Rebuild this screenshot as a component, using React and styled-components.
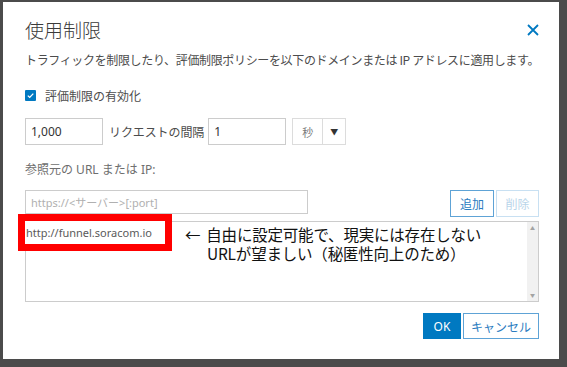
import React from "react";
import styled, { createGlobalStyle } from "styled-components";

const GlobalStyle = createGlobalStyle`
  html, body {
    margin: 0;
    padding: 0;
    background: #4b4b4b;
    font-family: "Noto Sans", "Noto Sans CJK JP", sans-serif;
  }
`;

const Page = styled.div`
  width: 567px;
  height: 367px;
  padding: 2px 0 0 3px;
  box-sizing: border-box;
  overflow: hidden;
`;

const Dialog = styled.div`
  width: 556px;
  height: 357px;
  background: #fff;
  box-sizing: border-box;
  padding: 16px 20px 0 22px;
  display: flex;
  flex-direction: column;
`;

const Header = styled.div`
  display: flex;
  align-items: center;
  justify-content: space-between;
  height: 24px;
`;

const Title = styled.div`
  font-size: 19px;
  line-height: 24px;
  font-weight: 300;
  color: #3a3a3a;
  font-family: "Noto Sans CJK JP", sans-serif;
`;

const CloseButton = styled.div`
  width: 12px;
  height: 12px;
  display: flex;
  cursor: pointer;
`;

const Description = styled.div`
  margin-top: 9px;
  font-size: 12px;
  letter-spacing: -0.35px;
  line-height: 18px;
  color: #4c4c4c;
  font-family: "Noto Sans CJK JP", sans-serif;
  white-space: nowrap;
`;

const CheckRow = styled.label`
  margin-top: 17px;
  height: 18px;
  display: flex;
  align-items: center;
  gap: 9px;
  font-size: 12px;
  color: #4c4c4c;
  font-family: "Noto Sans CJK JP", sans-serif;
`;

const CheckBox = styled.span`
  width: 11px;
  height: 11px;
  border-radius: 1px;
  background: #0079c1;
  display: flex;
  align-items: center;
  justify-content: center;
`;

const RateRow = styled.div`
  margin-top: 14px;
  display: flex;
  align-items: center;
  height: 27px;
`;

const TextInput = styled.div`
  box-sizing: border-box;
  width: ${({ $w }) => $w}px;
  height: ${({ $h }) => $h || 27}px;
  border: 1px solid #cccccc;
  padding: 0 5px;
  display: flex;
  align-items: center;
  font-size: ${({ $placeholder }) => ($placeholder ? 11 : 12)}px;
  color: ${({ $placeholder }) => ($placeholder ? "#b0b0b0" : "#333")};
  background: #fff;
  white-space: nowrap;
`;

const InlineLabel = styled.span`
  margin: 0 4px 0 6px;
  font-size: 12px;
  letter-spacing: -0.1px;
  color: #4c4c4c;
  font-family: "Noto Sans CJK JP", sans-serif;
`;

const Select = styled.div`
  margin-left: 6px;
  display: flex;
  height: 27px;
  border: 1px solid #dcdcdc;
  box-sizing: border-box;
`;

const SelectValue = styled.div`
  width: 29px;
  display: flex;
  align-items: center;
  justify-content: center;
  font-size: 11px;
  color: #777;
  font-family: "Noto Sans CJK JP", sans-serif;
`;

const SelectArrow = styled.div`
  width: 22px;
  border-left: 1px solid #dcdcdc;
  display: flex;
  align-items: center;
  justify-content: center;
  font-size: 8px;
  color: #333;
`;

const FieldLabel = styled.div`
  margin-top: 17px;
  font-size: 12px;
  line-height: 16px;
  color: #6e6e6e;
  font-family: "Noto Sans", "Noto Sans CJK JP", sans-serif;
`;

const UrlRow = styled.div`
  margin-top: 12px;
  display: flex;
  align-items: flex-start;
  height: 27px;
`;

const Spacer = styled.div`
  flex: 1;
`;

const OutlineButton = styled.button`
  box-sizing: border-box;
  width: ${({ $w }) => $w}px;
  height: ${({ $h }) => $h || 27}px;
  margin-left: ${({ $ml }) => $ml || 0}px;
  padding: 0;
  background: #fff;
  border: 1px solid ${({ disabled }) => (disabled ? "#c8e0f2" : "#5ea3d6")};
  color: ${({ disabled }) => (disabled ? "#b9d5ea" : "#2b7cbf")};
  font-size: 12px;
  font-family: "Noto Sans CJK JP", sans-serif;
  cursor: pointer;
`;

const PrimaryButton = styled.button`
  box-sizing: border-box;
  width: 38px;
  height: 26px;
  padding: 0;
  border: none;
  background: #0079c1;
  color: #fff;
  font-size: 12px;
  font-family: "Noto Sans", sans-serif;
  cursor: pointer;
`;

const ListBox = styled.div`
  position: relative;
  margin-top: 4px;
  height: 81px;
  box-sizing: border-box;
  border: 1px solid #cccccc;
  display: flex;
`;

const ListItems = styled.div`
  flex: 1;
  padding: 4px 5px;
`;

const ListItem = styled.div`
  font-size: 11px;
  line-height: 16px;
  color: #5a5a5a;
`;

const Scrollbar = styled.div`
  width: 11px;
  background: #f1f1f1;
  display: flex;
  flex-direction: column;
  justify-content: space-between;
  align-items: center;
  padding: 3px 0;
  box-sizing: border-box;
  font-size: 5px;
  line-height: 6px;
  color: #a3a3a3;
`;

const Highlight = styled.div`
  position: absolute;
  left: -8px;
  top: -8px;
  width: 154px;
  height: 37px;
  box-sizing: border-box;
  border: 7px solid #ff0000;
  background: #fff;
  display: flex;
  align-items: center;
  padding-left: 1px;
`;

const Note = styled.div`
  position: absolute;
  left: 159px;
  top: 3px;
  display: flex;
  flex-direction: column;
  gap: 1px;
  font-size: 15.5px;
  letter-spacing: -0.2px;
  line-height: 18px;
  color: #111;
  font-family: "Noto Sans CJK JP", sans-serif;
  white-space: nowrap;
`;

const NoteLine = styled.div`
  padding-left: ${({ $indent }) => $indent || 0}px;
`;

const Arrow = styled.span`
  margin-right: 6px;
`;

const Footer = styled.div`
  margin-top: 11px;
  display: flex;
  justify-content: flex-end;
  gap: 2px;
`;

export default function App() {
  return (
    <Page>
      <GlobalStyle />
      <Dialog>
        <Header>
          <Title>使用制限</Title>
          <CloseButton>
            <svg width="12" height="12" viewBox="0 0 12 12">
              <path d="M1 1 L11 11 M11 1 L1 11" stroke="#0079c1" strokeWidth="1.8" fill="none" />
            </svg>
          </CloseButton>
        </Header>
        <Description>
          トラフィックを制限したり、評価制限ポリシーを以下のドメインまたは IP アドレスに適用します。
        </Description>
        <CheckRow>
          <CheckBox>
            <svg width="9" height="9" viewBox="0 0 9 9">
              <path d="M1.8 4.6 L3.7 6.4 L7.3 2.6" stroke="#fff" strokeWidth="1.3" fill="none" />
            </svg>
          </CheckBox>
          評価制限の有効化
        </CheckRow>
        <RateRow>
          <TextInput $w={78}>1,000</TextInput>
          <InlineLabel>リクエストの間隔</InlineLabel>
          <TextInput $w={78}>1</TextInput>
          <Select>
            <SelectValue>秒</SelectValue>
            <SelectArrow>▼</SelectArrow>
          </Select>
        </RateRow>
        <FieldLabel>参照元の URL または IP:</FieldLabel>
        <UrlRow>
          <TextInput $w={283} $h={24} $placeholder>
            https://&lt;サーバー&gt;[:port]
          </TextInput>
          <Spacer />
          <OutlineButton $w={44}>追加</OutlineButton>
          <OutlineButton $w={43} $ml={2} disabled>
            削除
          </OutlineButton>
        </UrlRow>
        <ListBox>
          <ListItems />
          <Scrollbar>
            <span>▲</span>
            <span>▼</span>
          </Scrollbar>
          <Highlight>
            <ListItem>http://funnel.soracom.io</ListItem>
          </Highlight>
          <Note>
            <NoteLine>
              <Arrow>←</Arrow>自由に設定可能で、現実には存在しない
            </NoteLine>
            <NoteLine $indent={22}>URLが望ましい（秘匿性向上のため）</NoteLine>
          </Note>
        </ListBox>
        <Footer>
          <PrimaryButton>OK</PrimaryButton>
          <OutlineButton $w={76} $h={26}>
            キャンセル
          </OutlineButton>
        </Footer>
      </Dialog>
    </Page>
  );
}
